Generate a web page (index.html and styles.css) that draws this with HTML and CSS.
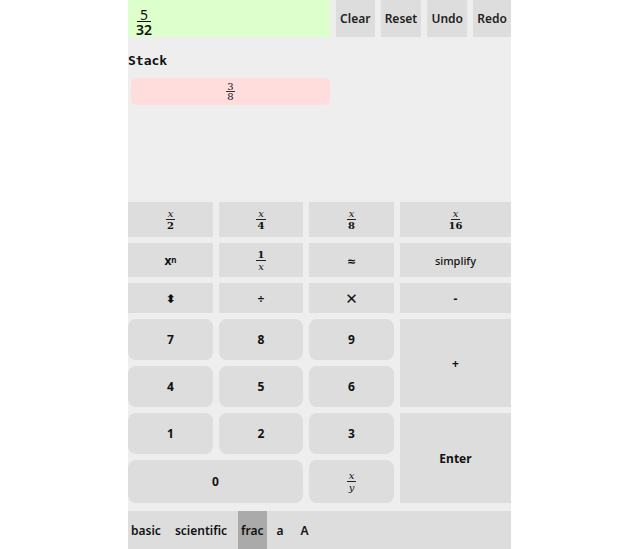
FILE: index.html
```html
<!DOCTYPE html>
<html>
<head>
<meta charset="utf-8">
<link rel="stylesheet" href="styles.css">
</head>
<body>
<div class="app">
  <div class="top">
    <div class="display">
      <span class="dfrac"><span class="dnum">5</span><span class="dden">32</span></span>
    </div>
    <button class="tbtn">Clear</button>
    <button class="tbtn">Reset</button>
    <button class="tbtn">Undo</button>
    <button class="tbtn">Redo</button>
  </div>
  <div class="stack">
    <div class="stack-label">Stack</div>
    <div class="stack-item"><span class="sfrac"><span class="snum">3</span><span class="sden">8</span></span></div>
  </div>
  <div class="pad">
    <div class="key sq"><span class="kfrac"><i>x</i><span class="kden">2</span></span></div>
    <div class="key sq"><span class="kfrac"><i>x</i><span class="kden">4</span></span></div>
    <div class="key sq"><span class="kfrac"><i>x</i><span class="kden">8</span></span></div>
    <div class="key sq"><span class="kfrac"><i>x</i><span class="kden">16</span></span></div>

    <div class="key sq">x<sup>n</sup></div>
    <div class="key sq"><span class="kfrac"><span class="k1">1</span><i class="kdenx">x</i></span></div>
    <div class="key sq small">≈</div>
    <div class="key sq norm">simplify</div>

    <div class="key sq">⬍</div>
    <div class="key sq">÷</div>
    <div class="key sq times">✕</div>
    <div class="key sq">-</div>

    <div class="key rd">7</div>
    <div class="key rd">8</div>
    <div class="key rd">9</div>
    <div class="key sq plus">+</div>

    <div class="key rd">4</div>
    <div class="key rd">5</div>
    <div class="key rd">6</div>

    <div class="key rd">1</div>
    <div class="key rd">2</div>
    <div class="key rd">3</div>
    <div class="key sq enter">Enter</div>

    <div class="key rd zero">0</div>
    <div class="key rd"><span class="kfrac"><i>x</i><i class="kden">y</i></span></div>
  </div>
  <div class="tabs">
    <span class="tab">basic</span>
    <span class="tab">scientific</span>
    <span class="tab active">frac</span>
    <span class="tab tab-a">a</span>
    <span class="tab">A</span>
  </div>
</div>
</body>
</html>
```

FILE: styles.css
```css
html, body {
  margin: 0;
  padding: 0;
  background: #fff;
}
body {
  font-family: "Noto Sans", "DejaVu Sans", sans-serif;
}
.app {
  width: 383px;
  margin: 0 auto;
  background: #eee;
  height: 549px;
  display: flex;
  flex-direction: column;
}
.top {
  display: flex;
  gap: 6px;
  height: 37px;
}
.display {
  width: 202px;
  background: #dfc;
  display: flex;
  align-items: center;
  padding-left: 7px;
  box-sizing: border-box;
}
.dfrac {
  display: inline-flex;
  flex-direction: column;
  align-items: center;
  font-size: 14px;
  line-height: 13px;
  color: #111;
  margin-top: 6px;
}
.dnum {
  padding: 0 3px 0;
  border-bottom: 1px solid #111;
}
.dden {
  padding: 1px 1px 0;
  font-weight: 600;
}
.tbtn {
  flex: 1 1 auto;
  border: none;
  background: #ddd;
  font-family: "Noto Sans", sans-serif;
  font-weight: 600;
  font-size: 12px;
  color: #222;
  padding: 0;
  margin: 0;
}
.stack {
  height: 165px;
  display: flex;
  flex-direction: column;
}
.stack-label {
  font-family: "DejaVu Sans Mono", monospace;
  font-weight: bold;
  font-size: 13px;
  color: #111;
  margin-top: 16px;
  line-height: 15px;
}
.stack-item {
  margin: 10px 0 0 3px;
  width: 199px;
  height: 27px;
  background: #fdd;
  border-radius: 5px;
  display: flex;
  align-items: center;
  justify-content: center;
}
.sfrac, .kfrac {
  display: inline-flex;
  flex-direction: column;
  align-items: center;
  font-family: "DejaVu Serif", serif;
  color: #111;
}
.sfrac {
  font-size: 10px;
  line-height: 9px;
}
.snum {
  border-bottom: 1px solid #333;
  padding: 0 1px;
}
.pad {
  display: grid;
  grid-template-columns: 85px 84px 85px 111px;
  grid-template-rows: 35px 34px 30px 41px 41px 41px 43px;
  gap: 6px;
}
.key {
  background: #ddd;
  display: flex;
  align-items: center;
  justify-content: center;
  font-weight: bold;
  font-size: 12px;
  color: #111;
}
.rd {
  border-radius: 8px;
}
.norm {
  font-weight: 500;
  font-size: 11px;
}
.small {
  font-size: 11px;
}
.times {
  font-weight: normal;
  font-size: 15px;
}
.plus {
  grid-column: 4;
  grid-row: 4 / span 2;
}
.enter {
  grid-column: 4;
  grid-row: 6 / span 2;
}
.zero {
  grid-column: 1 / span 2;
}
.kfrac {
  font-size: 10px;
  line-height: 9px;
  font-weight: normal;
}
.kfrac i {
  padding: 0 2px 1px;
  border-bottom: 1px solid #222;
}
.kfrac .kden {
  border-bottom: none;
  padding: 1px 1px 0;
  font-weight: bold;
}
.kfrac i.kden {
  font-weight: normal;
}
.k1 {
  font-weight: bold;
  padding: 0 2px 1px;
  border-bottom: 1px solid #222;
}
.kfrac i.kdenx {
  border-bottom: none;
  padding: 1px 1px 0;
}
sup {
  font-size: 8px;
  line-height: 0;
  vertical-align: 3px;
}
.tabs {
  margin-top: 8px;
  background: #ddd;
  flex: 1;
  display: flex;
  align-items: stretch;
}
.tab {
  display: flex;
  align-items: center;
  padding: 0 3px;
  margin-right: 8px;
  font-weight: 600;
  font-size: 12px;
  color: #111;
}
.tab.active {
  background: #aaa;
  margin-right: 7px;
}
.tab-a {
  margin-right: 11px;
}
```
